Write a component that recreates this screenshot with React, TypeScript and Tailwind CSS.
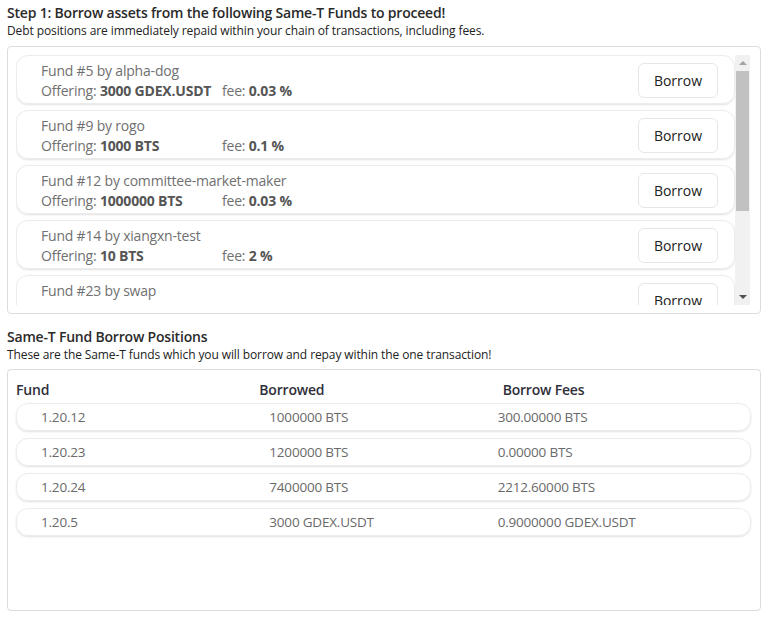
import React from "react"

interface Fund {
  id: number
  owner: string
  amount: string
  fee: string
}

interface Position {
  fund: string
  borrowed: string
  fees: string
}

const funds: Fund[] = [
  { id: 5, owner: "alpha-dog", amount: "3000 GDEX.USDT", fee: "0.03" },
  { id: 9, owner: "rogo", amount: "1000 BTS", fee: "0.1" },
  { id: 12, owner: "committee-market-maker", amount: "1000000 BTS", fee: "0.03" },
  { id: 14, owner: "xiangxn-test", amount: "10 BTS", fee: "2" },
  { id: 23, owner: "swap", amount: "7400000 BTS", fee: "0.03" },
]

const positions: Position[] = [
  { fund: "1.20.12", borrowed: "1000000 BTS", fees: "300.00000 BTS" },
  { fund: "1.20.23", borrowed: "1200000 BTS", fees: "0.00000 BTS" },
  { fund: "1.20.24", borrowed: "7400000 BTS", fees: "2212.60000 BTS" },
  { fund: "1.20.5", borrowed: "3000 GDEX.USDT", fees: "0.9000000 GDEX.USDT" },
]

export default function App() {
  return (
    <div className="min-h-[618px] w-[765px] bg-white pl-[7px] pr-[4px] pt-[3px] text-[#333]" style={{ fontFamily: "'Open Sans', 'Noto Sans', sans-serif" }}>
      <h2 className="text-[14px] font-semibold leading-[20px] tracking-[-0.2px] text-[#2a2a2a]">
        Step 1: Borrow assets from the following Same-T Funds to proceed!
      </h2>
      <p className="text-[12px] leading-[16px] tracking-[-0.1px] text-[#222]">
        Debt positions are immediately repaid within your chain of transactions, including fees.
      </p>

      <div className="mt-[7px] flex h-[268px] rounded-[4px] border border-[#dcdcdc] py-[8px] pl-[8px] pr-[10px]">
        <div className="flex h-[250px] flex-1 flex-col gap-[6px] overflow-hidden">
          {funds.map((f) => (
            <div
              key={f.id}
              className="flex h-[49px] shrink-0 items-center justify-between rounded-[12px] border border-[#ececec] pl-[24px] pr-[16px] shadow-[0_1px_2px_rgba(0,0,0,0.12)]"
            >
              <div className="pt-[2px] text-[14px] leading-[20px] tracking-[-0.2px] text-[#707070]">
                <div>Fund #{f.id} by {f.owner}</div>
                <div className="flex">
                  <span className="w-[181px]">
                    Offering: <b className="font-bold text-[#555]">{f.amount}</b>
                  </span>
                  <span>
                    fee: <b className="font-bold text-[#555]">{f.fee} %</b>
                  </span>
                </div>
              </div>
              <button className="mt-[2px] h-[35px] w-[80px] rounded-[6px] border border-[#e6e6e6] bg-white text-[14px] text-[#222]">
                Borrow
              </button>
            </div>
          ))}
        </div>
        <div className="flex h-[250px] w-[15px] flex-col items-center bg-[#f1f1f1]">
          <div className="flex h-[16px] w-full items-center justify-center">
            <div className="h-0 w-0 border-x-[4px] border-b-[4px] border-x-transparent border-b-[#a3a3a3]" />
          </div>
          <div className="h-[140px] w-[13px] bg-[#c1c1c1]" />
          <div className="flex-1" />
          <div className="flex h-[16px] w-full items-center justify-center">
            <div className="h-0 w-0 border-x-[4px] border-t-[4px] border-x-transparent border-t-[#505050]" />
          </div>
        </div>
      </div>

      <h2 className="mt-[13px] text-[14px] font-semibold leading-[20px] tracking-[-0.2px] text-[#2a2a2a]">
        Same-T Fund Borrow Positions
      </h2>
      <p className="text-[12px] leading-[16px] tracking-[-0.1px] text-[#222]">
        These are the Same-T funds which you will borrow and repay within the one transaction!
      </p>

      <div className="mt-[6px] h-[242px] rounded-[4px] border border-[#dcdcdc] px-[8px] pt-[7px]">
        <div className="grid h-[24px] grid-cols-3 items-center pr-[6px] text-[14px] font-semibold tracking-[-0.2px] text-[#2f2f3a]">
          <div>Fund</div>
          <div>Borrowed</div>
          <div>Borrow Fees</div>
        </div>
        <div className="mt-[2px] flex flex-col gap-[7px] pr-[1px]">
          {positions.map((p) => (
            <div
              key={p.fund}
              className="grid h-[28px] grid-cols-3 items-center rounded-[12px] border border-[#ececec] px-[24px] text-[13.5px] tracking-[-0.2px] text-[#6a6a6a] shadow-[0_1px_2px_rgba(0,0,0,0.12)]"
            >
              <div>{p.fund}</div>
              <div>{p.borrowed}</div>
              <div>{p.fees}</div>
            </div>
          ))}
        </div>
      </div>
    </div>
  )
}
